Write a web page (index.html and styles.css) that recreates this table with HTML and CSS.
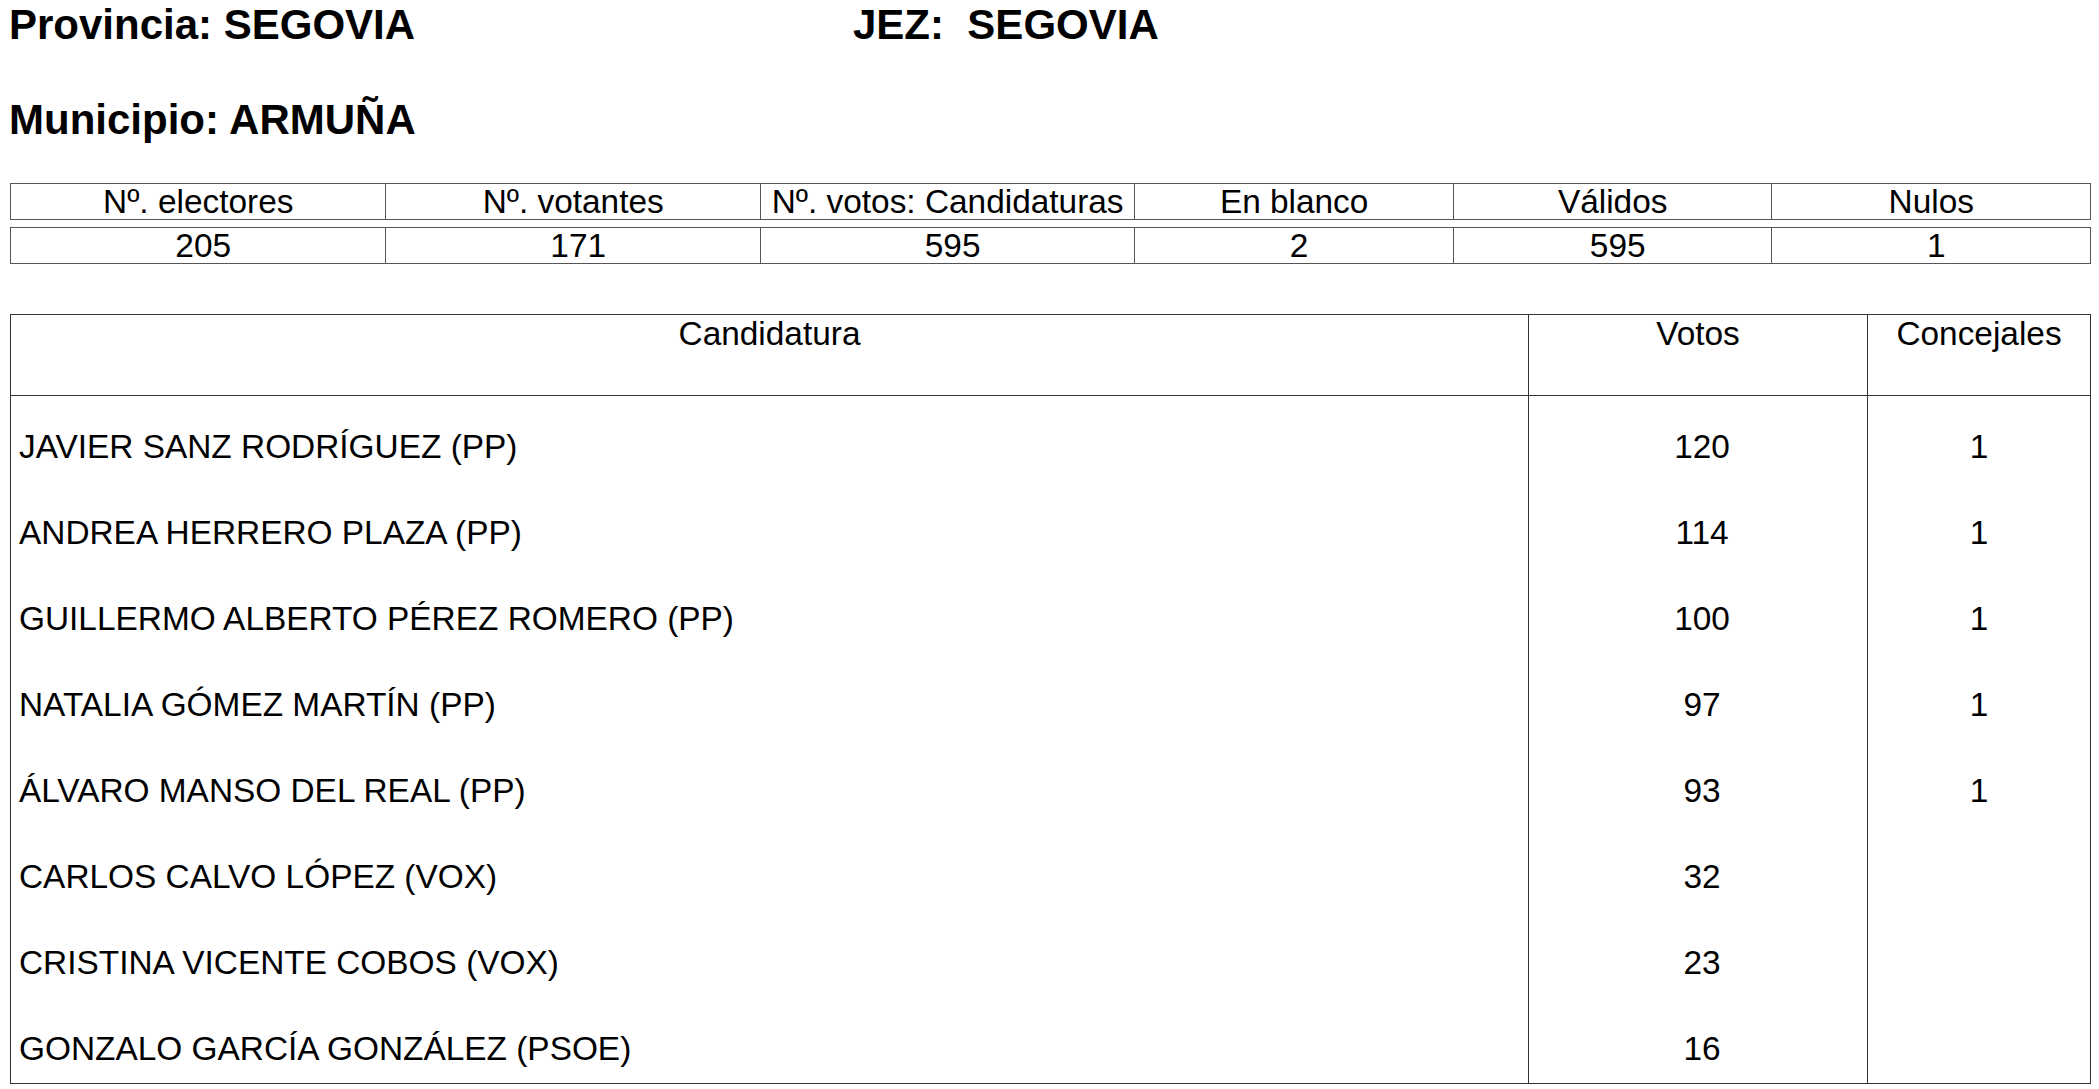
FILE: index.html
```html
<!DOCTYPE html>
<html lang="es">
<head>
<meta charset="utf-8">
<title>Resultados ARMUÑA</title>
<link rel="stylesheet" href="styles.css">
</head>
<body>
<div class="page">
  <div class="head-line">
    <h1 class="title title-prov">Provincia: SEGOVIA</h1>
    <h1 class="title">JEZ:&nbsp; SEGOVIA</h1>
  </div>
  <h1 class="title title-mun">Municipio: ARMUÑA</h1>

  <div class="summary">
    <div class="sum-row">
      <div class="sum-cell wide">Nº. electores</div>
      <div class="sum-cell wide">Nº. votantes</div>
      <div class="sum-cell wide">Nº. votos: Candidaturas</div>
      <div class="sum-cell">En blanco</div>
      <div class="sum-cell">Válidos</div>
      <div class="sum-cell">Nulos</div>
    </div>
    <div class="sum-row sum-values">
      <div class="sum-cell wide">205</div>
      <div class="sum-cell wide">171</div>
      <div class="sum-cell wide">595</div>
      <div class="sum-cell">2</div>
      <div class="sum-cell">595</div>
      <div class="sum-cell">1</div>
    </div>
  </div>

  <table class="results">
    <thead>
      <tr>
        <th class="c-name">Candidatura</th>
        <th class="c-votes">Votos</th>
        <th class="c-seats">Concejales</th>
      </tr>
    </thead>
    <tbody>
      <tr><td class="c-name">JAVIER SANZ RODRÍGUEZ (PP)</td><td class="c-votes">120</td><td class="c-seats">1</td></tr>
      <tr><td class="c-name">ANDREA HERRERO PLAZA (PP)</td><td class="c-votes">114</td><td class="c-seats">1</td></tr>
      <tr><td class="c-name">GUILLERMO ALBERTO PÉREZ ROMERO (PP)</td><td class="c-votes">100</td><td class="c-seats">1</td></tr>
      <tr><td class="c-name">NATALIA GÓMEZ MARTÍN (PP)</td><td class="c-votes">97</td><td class="c-seats">1</td></tr>
      <tr><td class="c-name">ÁLVARO MANSO DEL REAL (PP)</td><td class="c-votes">93</td><td class="c-seats">1</td></tr>
      <tr><td class="c-name">CARLOS CALVO LÓPEZ (VOX)</td><td class="c-votes">32</td><td class="c-seats"></td></tr>
      <tr><td class="c-name">CRISTINA VICENTE COBOS (VOX)</td><td class="c-votes">23</td><td class="c-seats"></td></tr>
      <tr><td class="c-name">GONZALO GARCÍA GONZÁLEZ (PSOE)</td><td class="c-votes">16</td><td class="c-seats"></td></tr>
    </tbody>
  </table>
</div>
</body>
</html>
```

FILE: styles.css
```css
html, body {
  margin: 0;
  padding: 0;
  background: #ffffff;
}

body {
  font-family: "Liberation Sans", Arial, sans-serif;
  color: #000000;
}

.page {
  width: 2081px;
  padding: 1px 0 0 10px;
}

.head-line {
  display: flex;
  margin-left: -1px;
}

.title {
  margin: 0;
  font-size: 42px;
  font-weight: bold;
  line-height: 47px;
  white-space: nowrap;
}

.title-prov {
  width: 844px;
}

.title-mun {
  margin: 48px 0 0 -1px;
}

.summary {
  margin-top: 40px;
  display: flex;
  flex-direction: column;
  gap: 7px;
}

.sum-row {
  display: flex;
  border: 1px solid #555555;
  height: 37px;
  box-sizing: border-box;
}

.sum-cell {
  width: 319px;
  box-sizing: border-box;
  font-size: 33.4px;
  line-height: 36px;
  text-align: center;
  white-space: nowrap;
  border-left: 1px solid #555555;
}

.sum-cell:first-child {
  border-left: none;
}

.sum-cell.wide {
  width: 375px;
}

.sum-values .sum-cell {
  padding-left: 10px;
}

.results {
  margin-top: 50px;
  width: 2081px;
  border-collapse: collapse;
  font-size: 33.4px;
  table-layout: fixed;
}

.results th,
.results td {
  padding: 0;
  border-left: 1px solid #333333;
  border-right: 1px solid #333333;
  vertical-align: top;
  line-height: 38px;
  white-space: nowrap;
}

.results th {
  font-weight: normal;
  height: 81px;
  box-sizing: border-box;
  text-align: center;
  border-top: 1px solid #333333;
  border-bottom: 1px solid #333333;
}

.results td {
  height: 86px;
  box-sizing: border-box;
  padding-top: 32px;
}

.results tbody tr:last-child td {
  border-bottom: 1px solid #333333;
}

.results .c-name {
  width: 1518px;
}

.results td.c-name {
  padding-left: 8px;
  text-align: left;
}

.results .c-votes {
  width: 339px;
  text-align: center;
}

.results td.c-votes {
  padding-left: 8px;
}

.results .c-seats {
  text-align: center;
}
```
